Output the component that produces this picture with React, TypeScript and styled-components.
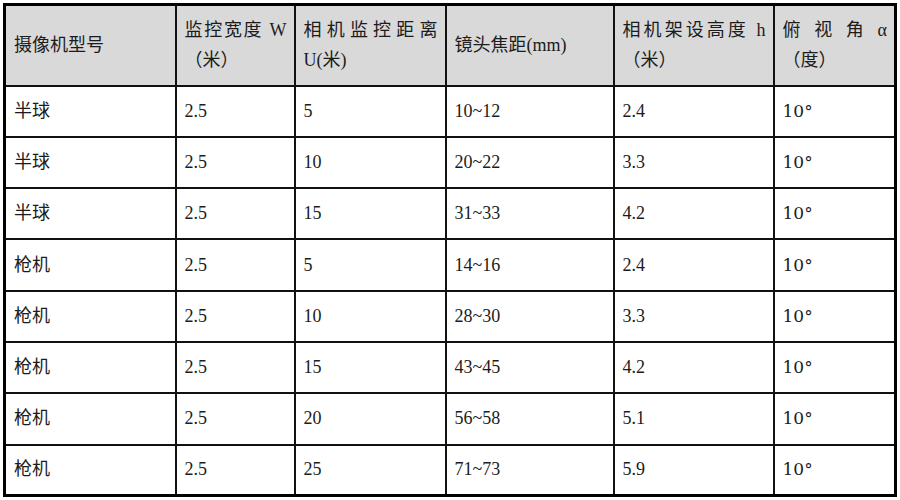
import React from "react";
import styled, { createGlobalStyle } from "styled-components";

const GlobalStyle = createGlobalStyle`
  html, body {
    margin: 0;
    padding: 0;
    background: #ffffff;
  }
  body {
    font-family: "Liberation Serif", "Noto Sans CJK SC", serif;
    color: #1c1c1c;
  }
`;

const Page = styled.div`
  width: 900px;
  height: 500px;
  padding: 3px 0 0 3px;
  box-sizing: border-box;
`;

const Sheet = styled.table`
  width: 891px;
  table-layout: fixed;
  border-collapse: collapse;
  border: 3px solid #000;
  font-size: 18px;
`;

const HeadRow = styled.tr`
  height: 81px;
  background: #d9d9d9;
`;

const BodyRow = styled.tr`
  height: 51.3px;
`;

const HeadCell = styled.th`
  border: 2px solid #111;
  padding: 0 7px 0 8px;
  text-align: left;
  font-weight: 400;
  line-height: 30px;
  vertical-align: middle;
`;

const Cell = styled.td`
  border: 2px solid #111;
  padding: 0 7px 1px 8px;
  line-height: 30px;
  vertical-align: middle;
`;

const Line = styled.span<{ $justify?: boolean }>`
  display: block;
  text-align: ${({ $justify }) => ($justify ? "justify" : "left")};
  text-align-last: ${({ $justify }) => ($justify ? "justify" : "left")};
`;

const Deg = styled.span`
  font-family: "DejaVu Serif", serif;
  font-size: 17px;
`;

const widths = [171, 119, 151, 168, 160, 122];

const rows = [
  ["半球", "2.5", "5", "10~12", "2.4"],
  ["半球", "2.5", "10", "20~22", "3.3"],
  ["半球", "2.5", "15", "31~33", "4.2"],
  ["枪机", "2.5", "5", "14~16", "2.4"],
  ["枪机", "2.5", "10", "28~30", "3.3"],
  ["枪机", "2.5", "15", "43~45", "4.2"],
  ["枪机", "2.5", "20", "56~58", "5.1"],
  ["枪机", "2.5", "25", "71~73", "5.9"],
];

export default function App() {
  return (
    <>
      <GlobalStyle />
      <Page>
        <Sheet>
          <colgroup>
            {widths.map((w, i) => (
              <col key={i} style={{ width: w }} />
            ))}
          </colgroup>
          <thead>
            <HeadRow>
              <HeadCell>摄像机型号</HeadCell>
              <HeadCell>
                <Line $justify>监控宽度 W</Line>
                <Line>（米）</Line>
              </HeadCell>
              <HeadCell>
                <Line $justify>相机监控距离</Line>
                <Line>U(米)</Line>
              </HeadCell>
              <HeadCell>镜头焦距(mm)</HeadCell>
              <HeadCell>
                <Line $justify>相机架设高度 h</Line>
                <Line>（米）</Line>
              </HeadCell>
              <HeadCell>
                <Line $justify>俯 视 角 α</Line>
                <Line>（度）</Line>
              </HeadCell>
            </HeadRow>
          </thead>
          <tbody>
            {rows.map((r, i) => (
              <BodyRow key={i}>
                {r.map((v, j) => (
                  <Cell key={j}>{v}</Cell>
                ))}
                <Cell>
                  <Deg>10°</Deg>
                </Cell>
              </BodyRow>
            ))}
          </tbody>
        </Sheet>
      </Page>
    </>
  );
}
